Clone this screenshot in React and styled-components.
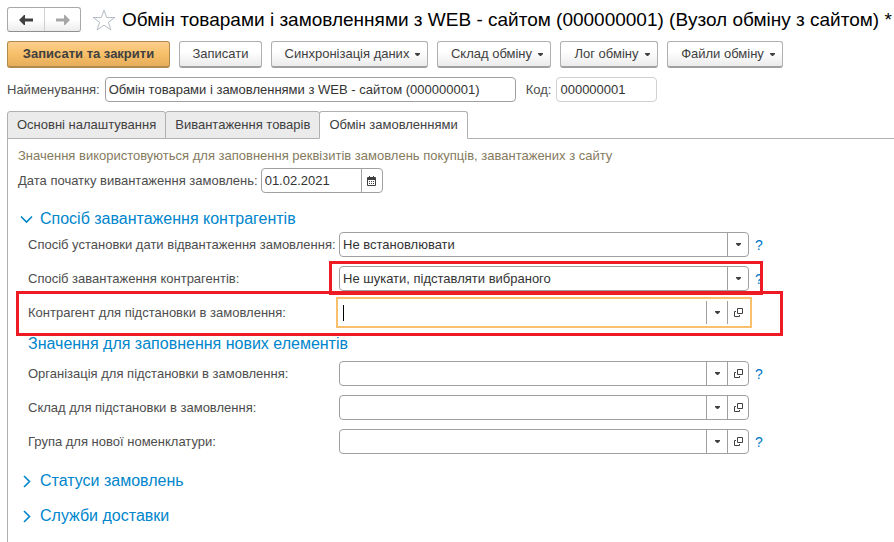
import { useState } from 'react';
import styled, { createGlobalStyle, css } from 'styled-components';

const GlobalStyle = createGlobalStyle`
    *, *::before, *::after {
        box-sizing: border-box;
    }
    body {
        margin: 0;
        background: #fff;
        color: #404040;
        font: 13px/16px 'Liberation Sans', Arial, sans-serif;
    }
    button, input, select {
        margin: 0;
        font: inherit;
        color: inherit;
    }
`;

const toolbarButtons = [
    { text: 'Записати та закрити', primary: true, width: 163 },
    { text: 'Записати', width: 83 },
    { text: 'Синхронізація даних', menu: true, width: 157 },
    { text: 'Склад обміну', menu: true, width: 114 },
    { text: 'Лог обміну', menu: true, width: 98 },
    { text: 'Файли обміну', menu: true, width: 116 },
];

const tabs = ['Основні налаштування', 'Вивантаження товарів', 'Обмін замовленнями'];

const newItemFields = [
    { id: 'organization', label: 'Організація для підстановки в замовлення:', help: true },
    { id: 'warehouse', label: 'Склад для підстановки в замовлення:' },
    { id: 'group', label: 'Група для нової номенклатури:', help: true },
];

const ArrowIcon = ({ flip }) => (
    <svg width="14" height="10" viewBox="0 0 14 10" fill="currentColor">
        <g transform={flip ? 'matrix(-1 0 0 1 14 0)' : undefined}>
            <path d="M0 5L5 0h1v3.5h8v3H6V10H5z" />
        </g>
    </svg>
);

const StarIcon = () => (
    <svg width="24" height="22" viewBox="0 0 24 22" fill="none" stroke="#b4bcc6">
        <path d="M12 1.2l2.7 7.3h8.2l-6.5 4.8 2.5 7.7-6.9-4.8L5.1 21l2.5-7.7L1.1 8.5h8.2z" />
    </svg>
);

const CaretDownIcon = () => (
    <svg width="5" height="3" viewBox="0 0 5 3" fill="currentColor">
        <path d="M0 0h5v1L3 3H2L0 1z" />
    </svg>
);

const OpenIcon = () => (
    <svg width="9" height="9" viewBox="0 0 9 9" fill="none" stroke="#404040">
        <path d="M3.5.5h5v5h-5zM2 3.5H.5v5h5V7" />
    </svg>
);

const CalendarIcon = () => (
    <svg width="9" height="10" viewBox="0 0 9 10" fill="none" stroke="#404040">
        <path d="M.5 1.5h8v8h-8zM0 2.5h9M0 3.5h9M2.5 0v2M6.5 0v2" />
        <path d="M2 5.5h5M2 7.5h5" strokeDasharray="1 1" />
    </svg>
);

const ChevronIcon = ({ open }) => (
    <svg width="13" height="13" viewBox="0 0 13 13" fill="none" stroke="currentColor" strokeWidth="1.6">
        <path d={open ? 'M1 3.5L6.5 9 12 3.5' : 'M4 1l5.5 5.5L4 12'} />
    </svg>
);

const SelectField = ({ id, label, options, marked }) => (
    <FormRow>
        <Label htmlFor={id}>{label}</Label>
        <FieldSlot>
            <Field>
                <Select id={id}>
                    {options.map((option) => (
                        <option key={option}>{option}</option>
                    ))}
                </Select>
                <SelectArrow>
                    <CaretDownIcon />
                </SelectArrow>
            </Field>
            {marked && <FieldMark />}
        </FieldSlot>
        <HelpButton type="button">?</HelpButton>
    </FormRow>
);

const ReferenceField = ({ id, label, help, active, marked }) => (
    <FormRow>
        <Label htmlFor={id}>{label}</Label>
        <FieldSlot>
            <Field $active={active}>
                {active && <TextCursor />}
                <Input id={id} type="text" />
                <FieldButton type="button" aria-label="Вибрати">
                    <CaretDownIcon />
                </FieldButton>
                <FieldButton type="button" aria-label="Відкрити">
                    <OpenIcon />
                </FieldButton>
            </Field>
        </FieldSlot>
        {help && <HelpButton type="button">?</HelpButton>}
        {marked && <RowMark />}
    </FormRow>
);

const App = () => {
    const [activeTab, setActiveTab] = useState(2);

    return (
        <Page>
            <GlobalStyle />
            <Header>
                <NavGroup>
                    <NavButton type="button" aria-label="Назад">
                        <ArrowIcon />
                    </NavButton>
                    <NavButton type="button" aria-label="Вперед" disabled>
                        <ArrowIcon flip />
                    </NavButton>
                </NavGroup>
                <StarButton type="button" aria-label="Обране">
                    <StarIcon />
                </StarButton>
                <Title>Обмін товарами і замовленнями з WEB - сайтом (000000001) (Вузол обміну з сайтом) *</Title>
            </Header>
            <Toolbar>
                {toolbarButtons.map(({ text, primary, menu, width }) => (
                    <ToolbarButton key={text} type="button" $primary={primary} $menu={menu} $width={width}>
                        {text}
                        {menu && <CaretDownIcon />}
                    </ToolbarButton>
                ))}
            </Toolbar>
            <NameRow>
                <Label htmlFor="name">Найменування:</Label>
                <Field $width={411}>
                    <Input
                        id="name"
                        type="text"
                        defaultValue="Обмін товарами і замовленнями з WEB - сайтом (000000001)"
                    />
                </Field>
                <CodeLabel htmlFor="code">Код:</CodeLabel>
                <Field $width={101} $muted>
                    <Input id="code" type="text" defaultValue="000000001" readOnly />
                </Field>
            </NameRow>
            <TabList role="tablist">
                {tabs.map((tab, index) => (
                    <Tab
                        key={tab}
                        type="button"
                        role="tab"
                        aria-selected={index === activeTab}
                        $active={index === activeTab}
                        onClick={() => setActiveTab(index)}
                    >
                        {tab}
                    </Tab>
                ))}
            </TabList>
            <Panel role="tabpanel">
                <Hint>Значення використовуються для заповнення реквізитів замовлень покупців, завантажених з сайту</Hint>
                <DateRow>
                    <Label htmlFor="startDate">Дата початку вивантаження замовлень:</Label>
                    <Field $width={122}>
                        <Input id="startDate" type="text" defaultValue="01.02.2021" />
                        <FieldButton type="button" aria-label="Календар">
                            <CalendarIcon />
                        </FieldButton>
                    </Field>
                </DateRow>
                <GroupButton type="button" aria-expanded="true">
                    <ChevronIcon open />
                    Спосіб завантаження контрагентів
                </GroupButton>
                <FieldGroup>
                    <SelectField
                        id="shipmentDate"
                        label="Спосіб установки дати відвантаження замовлення:"
                        options={['Не встановлювати']}
                    />
                    <SelectField
                        id="loadMode"
                        label="Спосіб завантаження контрагентів:"
                        options={['Не шукати, підставляти вибраного']}
                        marked
                    />
                    <ReferenceField id="partner" label="Контрагент для підстановки в замовлення:" active marked />
                </FieldGroup>
                <SubTitle>Значення для заповнення нових елементів</SubTitle>
                <FieldGroup>
                    {newItemFields.map((field) => (
                        <ReferenceField key={field.id} {...field} />
                    ))}
                </FieldGroup>
                <GroupButton type="button" aria-expanded="false">
                    <ChevronIcon />
                    Статуси замовлень
                </GroupButton>
                <GroupButton type="button" aria-expanded="false">
                    <ChevronIcon />
                    Служби доставки
                </GroupButton>
            </Panel>
        </Page>
    );
};

const Page = styled.main`
    display: flex;
    flex-direction: column;
    min-height: 100vh;
    padding: 7px 0 0 7px;
    overflow: hidden;
`;

const Header = styled.header`
    display: flex;
    align-items: center;
    height: 25px;
`;

const NavGroup = styled.div`
    display: flex;
    height: 25px;
    border: 1px solid #a9a9a9;
    border-bottom-color: #8f8f8f;
    border-radius: 3px;
    background: linear-gradient(#fff 50%, #ececec);
`;

const NavButton = styled.button`
    display: flex;
    align-items: center;
    justify-content: center;
    width: 36px;
    padding: 0;
    border: 0;
    background: none;
    color: #404040;

    & + & {
        border-left: 1px solid #d0d0d0;
    }
    &:disabled {
        color: #a6a6a6;
    }
`;

const StarButton = styled.button`
    display: flex;
    margin-left: 11px;
    padding: 0;
    border: 0;
    background: none;
`;

const Title = styled.h1`
    margin: 0 0 0 6px;
    color: #000;
    font-size: 19px;
    font-weight: normal;
    line-height: 24px;
    white-space: nowrap;
`;

const Toolbar = styled.div`
    display: flex;
    gap: 9px;
    margin-top: 9px;
`;

const ToolbarButton = styled.button`
    display: flex;
    align-items: center;
    justify-content: center;
    gap: 6px;
    min-width: ${({ $width }) => $width}px;
    height: 27px;
    padding: 0 0 0 ${({ $menu }) => ($menu ? 6 : 0)}px;
    border: 1px solid #b0b0b0;
    border-bottom: 2px solid #a0a0a0;
    border-radius: 3px;
    background: linear-gradient(#fff 40%, #ebebeb);
    white-space: nowrap;

    ${({ $primary }) =>
        $primary &&
        css`
            border-color: #b08a4c;
            background: linear-gradient(#fdd090, #f7bf68 50%, #e6ae5c);
            font-weight: bold;
        `}
`;

const NameRow = styled.div`
    display: flex;
    align-items: center;
    gap: 5px;
    margin-top: 9px;
`;

const Label = styled.label`
    color: #4d4d4d;
    white-space: nowrap;
`;

const CodeLabel = styled(Label)`
    margin-left: 5px;
`;

const Field = styled.div`
    display: flex;
    width: ${({ $width }) => ($width ? `${$width}px` : '100%')};
    height: 25px;
    border: 1px solid ${({ $muted }) => ($muted ? '#d0d0d0' : '#a0a0a0')};
    border-radius: 4px;
    background: #fff;
    color: #333;

    ${({ $active }) =>
        $active &&
        css`
            border-color: transparent;
            border-radius: 0;
            outline: 2px solid #f9bf6c;
            outline-offset: 1px;
        `}
`;

const controlStyle = css`
    flex: 1;
    min-width: 0;
    padding: 0 3px;
    border: 0;
    outline: none;
    background: none;
`;

const Input = styled.input`
    ${controlStyle}
`;

const Select = styled.select`
    ${controlStyle}
    appearance: none;
`;

const TextCursor = styled.span`
    align-self: center;
    width: 1px;
    height: 16px;
    margin-left: 3px;
    background: #000;
`;

const cellStyle = css`
    display: flex;
    align-items: center;
    justify-content: center;
    flex: none;
    width: 21px;
    padding: 0;
    border: 0;
    border-left: 1px solid #a0a0a0;
    background: none;
    color: #404040;
`;

const FieldButton = styled.button`
    ${cellStyle}
`;

const SelectArrow = styled.span`
    ${cellStyle}
    pointer-events: none;
`;

const TabList = styled.div`
    display: flex;
    margin-top: 9px;
    border-bottom: 1px solid #b0b0b0;
`;

const Tab = styled.button`
    height: 28px;
    margin: 0 0 -1px -1px;
    padding: 0 9px;
    border: 1px solid #b0b0b0;
    border-radius: 3px 3px 0 0;
    background: #ebebeb;
    white-space: nowrap;

    &:first-child {
        margin-left: 0;
    }
    ${({ $active }) =>
        $active &&
        css`
            border-bottom-color: #fff;
            background: #fff;
        `}
`;

const Panel = styled.section`
    flex: 1;
    padding: 9px 0 0 10px;
    border-left: 1px solid #b0b0b0;
`;

const Hint = styled.p`
    margin: 0;
    color: #857b5e;
`;

const DateRow = styled.div`
    display: flex;
    align-items: center;
    gap: 3px;
    margin: 4px 0 16px;
`;

const GroupButton = styled.button`
    display: flex;
    align-items: center;
    gap: 7px;
    height: 20px;
    margin: 0 0 15px;
    padding: 0 0 0 2px;
    border: 0;
    background: none;
    color: #0086cc;
    font-size: 16px;
    line-height: 20px;

    &[aria-expanded='true'] {
        margin-bottom: 3px;
    }
`;

const FieldGroup = styled.div`
    display: grid;
    gap: 9px;
    margin-left: 10px;
`;

const FormRow = styled.div`
    position: relative;
    display: grid;
    grid-template-columns: 311px minmax(0, 410px) 20px;
    align-items: center;
    justify-content: start;
`;

const FieldSlot = styled.div`
    position: relative;
`;

const FieldMark = styled.span`
    position: absolute;
    z-index: 1;
    inset: -5px -14px -4px -10px;
    border: 3px solid #ed1c24;
    pointer-events: none;
`;

const RowMark = styled.span`
    position: absolute;
    z-index: 1;
    top: -9px;
    bottom: -11px;
    left: -12px;
    width: 767px;
    border: 3px solid #ed1c24;
    pointer-events: none;
`;

const HelpButton = styled.button`
    padding: 0;
    border: 0;
    background: none;
    color: #0078c8;
    font-size: 14px;
`;

const SubTitle = styled.h2`
    margin: 9px 0 7px 10px;
    color: #0086cc;
    font-size: 16px;
    font-weight: normal;
    line-height: 20px;

    & + ${FieldGroup} {
        margin-bottom: 17px;
    }
`;

export default App;
